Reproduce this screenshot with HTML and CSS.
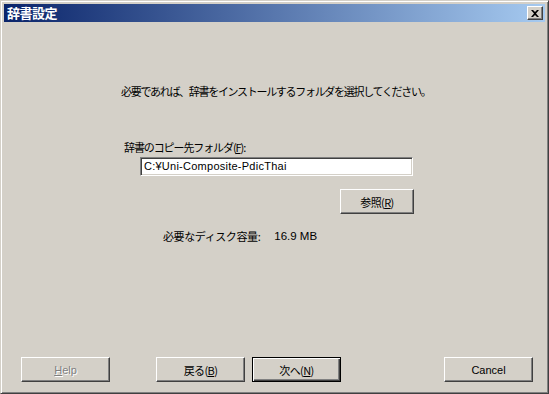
FILE: index.html
```html
<!DOCTYPE html>
<html lang="ja">
<head>
<meta charset="utf-8">
<title>辞書設定</title>
<link rel="stylesheet" href="styles.css">
</head>
<body>
<div class="window">
  <div class="titlebar">
    <span class="title">辞書設定</span>
    <span class="close"><svg width="8" height="7" viewBox="0 0 8 7"><path d="M0 0h2l2 2 2-2h2L5 3.5 8 7H6L4 5 2 7H0l3-3.5z" fill="#000"/></svg></span>
  </div>
  <div class="content">
    <p class="intro">必要であれば、辞書をインストールするフォルダを選択してください。</p>
    <div class="field">
      <div class="label">辞書のコピー先フォルダ(<u>F</u>):</div>
      <div class="textbox">C:¥Uni-Composite-PdicThai</div>
    </div>
    <div class="browse-row"><span class="btn browse">参照(<u>R</u>)</span></div>
    <div class="disk"><span class="disk-label">必要なディスク容量:</span><span class="disk-value">16.9 MB</span></div>
  </div>
  <div class="footer">
    <span class="btn help"><span class="dis"><u>H</u>elp</span></span>
    <span class="btn back">戻る(<u>B</u>)</span>
    <span class="btn next default">次へ(<u>N</u>)</span>
    <span class="btn cancel">Cancel</span>
  </div>
</div>
</body>
</html>
```
FILE: styles.css
```css
html, body {
  margin: 0;
  padding: 0;
  background: #d4d0c8;
}
.window {
  box-sizing: border-box;
  width: 549px;
  height: 394px;
  background: #d4d0c8;
  border-top: 1px solid #d4d0c8;
  border-left: 1px solid #d4d0c8;
  border-right: 1px solid #404040;
  border-bottom: 1px solid #404040;
  box-shadow: inset 1px 1px 0 #fff, inset -1px -1px 0 #808080;
  padding: 3px 3px 3px 3px;
  display: flex;
  flex-direction: column;
  font-family: "Noto Sans CJK JP", "Liberation Sans", sans-serif;
  font-size: 11px;
  color: #000;
}
.titlebar {
  height: 18px;
  background: linear-gradient(to right, #0a246a, #a6caf0);
  display: flex;
  align-items: center;
  justify-content: space-between;
  padding: 0 2px 0 3px;
}
.title {
  color: #fff;
  font-weight: bold;
  font-size: 13px;
  letter-spacing: -0.5px;
  line-height: 18px;
}
.close {
  box-sizing: border-box;
  width: 16px;
  height: 14px;
  background: #d4d0c8;
  border-top: 1px solid #fff;
  border-left: 1px solid #fff;
  border-right: 1px solid #404040;
  border-bottom: 1px solid #404040;
  box-shadow: inset -1px -1px 0 #808080;
  display: flex;
  align-items: center;
  justify-content: center;
}
.content {
  flex: 1;
  padding-left: 117px;
}
.intro {
  margin: 62px 0 0 0;
  line-height: 14px;
  letter-spacing: -1.3px;
}
.field {
  margin-top: 42px;
}
.label {
  margin-left: 3px;
  line-height: 14px;
  letter-spacing: -1.1px;
}
.textbox {
  box-sizing: border-box;
  margin: 3px 0 0 19px;
  width: 273px;
  height: 19px;
  background: #fff;
  border-top: 1px solid #808080;
  border-left: 1px solid #808080;
  border-right: 1px solid #fff;
  border-bottom: 1px solid #fff;
  box-shadow: inset 1px 1px 0 #404040, inset -1px -1px 0 #d4d0c8;
  font-family: "Liberation Sans", "Noto Sans CJK JP", sans-serif;
  font-size: 11px;
  letter-spacing: 0.25px;
  line-height: 17px;
  padding-left: 3px;
}
.browse-row {
  margin-top: 13px;
  padding-left: 219px;
  display: flex;
}
.btn {
  box-sizing: border-box;
  display: flex;
  align-items: center;
  justify-content: center;
  background: #d4d0c8;
  border-top: 1px solid #fff;
  border-left: 1px solid #fff;
  border-right: 1px solid #404040;
  border-bottom: 1px solid #404040;
  box-shadow: inset -1px -1px 0 #808080;
  height: 25px;
  letter-spacing: -0.6px;
}
.browse {
  width: 74px;
}
.disk {
  margin-top: 15px;
  padding-left: 42px;
  display: flex;
  line-height: 14px;
}
.disk-label {
  letter-spacing: -0.4px;
}
.disk-value {
  margin-left: 14px;
  font-family: "Liberation Sans", sans-serif;
  font-size: 11.5px;
  letter-spacing: 0;
}
.footer {
  display: flex;
  padding: 0 0 8px 17px;
  height: 25px;
}
.footer .btn {
  width: 89px;
}
.back { margin-left: 46px; }
.next { margin-left: 7px; }
.cancel { margin-left: 103px; font-family: "Liberation Sans", sans-serif; letter-spacing: 0; }
.default {
  border: 1px solid #000;
  box-shadow: inset 1px 1px 0 #fff, inset -1px -1px 0 #404040, inset -2px -2px 0 #808080;
}
.help .dis {
  color: #808080;
  text-shadow: 1px 1px 0 #fff;
  font-family: "Liberation Sans", sans-serif;
  letter-spacing: 0;
}
```
